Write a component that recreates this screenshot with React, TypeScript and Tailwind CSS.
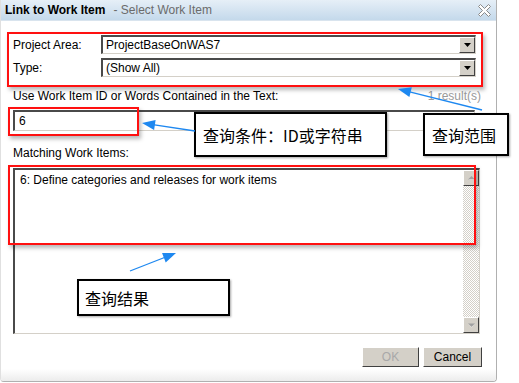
import React from "react";

function Arrow({ x1, y1, x2, y2 }: { x1: number; y1: number; x2: number; y2: number }) {
  const dx = x2 - x1;
  const dy = y2 - y1;
  const len = Math.sqrt(dx * dx + dy * dy);
  const ux = dx / len;
  const uy = dy / len;
  const hl = 13;
  const hw = 5;
  const bx = x2 - ux * hl;
  const by = y2 - uy * hl;
  const px = -uy;
  const py = ux;
  const pts = `${x2},${y2} ${bx + px * hw},${by + py * hw} ${bx - px * hw},${by - py * hw}`;
  return (
    <g>
      <line x1={x1} y1={y1} x2={bx + ux * 2} y2={by + uy * 2} stroke="#1e88f0" strokeWidth={1.3} />
      <polygon points={pts} fill="#1e88f0" />
    </g>
  );
}

function DropButton() {
  return (
    <div className="w-[16px] h-[16px] bg-[#d4d0c8] border-t border-l border-[#ffffff] border-r border-b border-r-[#404040] border-b-[#404040] flex items-center justify-center">
      <svg width="7" height="4" viewBox="0 0 7 4">
        <polygon points="0,0 7,0 3.5,4" fill="#000" />
      </svg>
    </div>
  );
}

function Combo({ value }: { value: string }) {
  return (
    <div className="h-[19px] flex items-center border-t-2 border-l-2 border-[#4a4a4a] border-r border-b border-r-[#d4d0c8] border-b-[#d4d0c8] bg-white pl-[3px]">
      <span className="flex-1 leading-[14px]">{value}</span>
      <DropButton />
    </div>
  );
}

function ScrollBtn({ up }: { up: boolean }) {
  return (
    <div className="w-[16px] h-[16px] bg-[#d4d0c8] border-t border-l border-white border-r border-b border-r-[#404040] border-b-[#404040] flex items-center justify-center">
      <svg width="9" height="6" viewBox="0 0 9 6">
        {up ? (
          <>
            <polygon points="1.5,5 7.5,5 4.5,2" fill="#ffffff" />
            <polygon points="1,4.5 8,4.5 4.5,1" fill="#a0a0a0" />
          </>
        ) : (
          <>
            <polygon points="1.5,2 7.5,2 4.5,5.5" fill="#ffffff" />
            <polygon points="1,1.5 8,1.5 4.5,5" fill="#a0a0a0" />
          </>
        )}
      </svg>
    </div>
  );
}

export default function App() {
  return (
    <div className="relative w-[519px] h-[383px] bg-white overflow-hidden font-['Liberation_Sans',Arial,sans-serif] text-[12px] text-black">
      <div className="w-[497px] h-[382px] flex flex-col border-r border-b border-l border-[#b0b0b0] border-l-[#e0e0e0] rounded-b-[4px] overflow-hidden">
        {/* title bar */}
        <div className="h-[21px] shrink-0 flex items-center justify-between pl-[4px] pr-[5px] bg-gradient-to-b from-[#e6eff7] to-[#c4d9eb] border-b border-[#d9e4ee]">
          <div className="flex items-center leading-[14px]">
            <span className="font-bold text-black">Link to Work Item</span>
            <span className="ml-[8px] text-[#6b6b6b]">- Select Work Item</span>
          </div>
          <svg width="13" height="13" viewBox="0 0 13 13">
            <polygon
              points="0.5,2.5 2.5,0.5 6.5,4.5 10.5,0.5 12.5,2.5 8.5,6.5 12.5,10.5 10.5,12.5 6.5,8.5 2.5,12.5 0.5,10.5 4.5,6.5"
              fill="#ffffff"
              stroke="#8a8a8a"
              strokeWidth="1"
            />
          </svg>
        </div>

        {/* content */}
        <div className="flex-1 flex flex-col pl-[12px] pr-[16px]">
          <div className="mt-[14px] grid grid-cols-[88px_1fr] gap-y-[4px] items-center mr-[4px]">
            <span className="leading-[14px]">Project Area:</span>
            <Combo value="ProjectBaseOnWAS7" />
            <span className="leading-[14px]">Type:</span>
            <Combo value="(Show All)" />
          </div>

          <div className="mt-[12px] flex justify-between leading-[14px] mr-[-1px]">
            <span>Use Work Item ID or Words Contained in the Text:</span>
            <span className="text-[#9a9a9a]">1 result(s)</span>
          </div>

          <div className="mt-[7px] h-[21px] flex items-center border-t-2 border-l-2 border-[#4a4a4a] border-r border-b border-r-[#d4d0c8] border-b-[#d4d0c8] pl-[4px] mr-[5px]">
            <span className="leading-[14px]">6</span>
          </div>

          <div className="mt-[15px] leading-[14px]">Matching Work Items:</div>

          <div className="mt-[8px] h-[166px] flex border-t-2 border-l-2 border-[#4a4a4a] border-r border-b border-r-[#d4d0c8] border-b-[#d4d0c8]">
            <div className="flex-1 pl-[5px] pt-[3px] leading-[14px]">6: Define categories and releases for work items</div>
            <div className="w-[16px] flex flex-col">
              <ScrollBtn up />
              <div className="flex-1 bg-[repeating-conic-gradient(#d4d0c8_0%_25%,#ffffff_0%_50%)] bg-[length:2px_2px]" />
              <ScrollBtn up={false} />
            </div>
          </div>

          <div className="mt-[13px] flex justify-end gap-[4px] mr-[-2px]">
            <div className="w-[57px] h-[20px] bg-[#d4d0c8] border-t border-l border-white border-r border-b border-r-[#404040] border-b-[#404040] flex items-center justify-center text-[#a8a8a8] leading-[14px]">
              OK
            </div>
            <div className="w-[59px] h-[20px] bg-[#d4d0c8] border-t border-l border-white border-r border-b border-r-[#404040] border-b-[#404040] flex items-center justify-center leading-[14px]">
              Cancel
            </div>
          </div>
        </div>
        <div className="h-[12px] shrink-0 bg-gradient-to-b from-[#ffffff] to-[#ececec]" />
      </div>

      {/* annotations: red boxes */}
      <div className="absolute left-[7px] top-[32px] w-[476px] h-[55px] border-2 border-[#ff1010] shadow-[2px_3px_4px_rgba(0,0,0,0.28)]" />
      <div className="absolute left-[8px] top-[107px] w-[131px] h-[29px] border-2 border-[#ff1010] shadow-[2px_3px_4px_rgba(0,0,0,0.28)]" />
      <div className="absolute left-[8px] top-[165px] w-[468px] h-[80px] border-2 border-[#ff1010] shadow-[2px_3px_4px_rgba(0,0,0,0.28)]" />

      {/* callouts */}
      <div className="absolute left-[194px] top-[112px] w-[193px] h-[45px] border-2 border-black bg-white shadow-[1px_1px_2px_rgba(0,0,0,0.35)] flex items-center pl-[7px] font-['Noto_Sans_CJK_SC',sans-serif] text-[16px] leading-[20px]">
        查询条件：ID或字符串
      </div>
      <div className="absolute left-[423px] top-[113px] w-[86px] h-[43px] border-2 border-black bg-white shadow-[1px_1px_2px_rgba(0,0,0,0.35)] flex items-center pl-[7px] font-['Noto_Sans_CJK_SC',sans-serif] text-[16px] leading-[20px]">
        查询范围
      </div>
      <div className="absolute left-[77px] top-[279px] w-[153px] h-[37px] border-2 border-black bg-white shadow-[1px_1px_2px_rgba(0,0,0,0.35)] flex items-center pl-[6px] font-['Noto_Sans_CJK_SC',sans-serif] text-[16px] leading-[20px]">
        查询结果
      </div>

      {/* arrows */}
      <svg className="absolute left-0 top-0 pointer-events-none" width="519" height="383" viewBox="0 0 519 383">
        <Arrow x1={482} y1={110} x2={398} y2={89} />
        <Arrow x1={195} y1={131} x2={142} y2={123} />
        <Arrow x1={130} y1={271} x2={176} y2={253} />
      </svg>
    </div>
  );
}
